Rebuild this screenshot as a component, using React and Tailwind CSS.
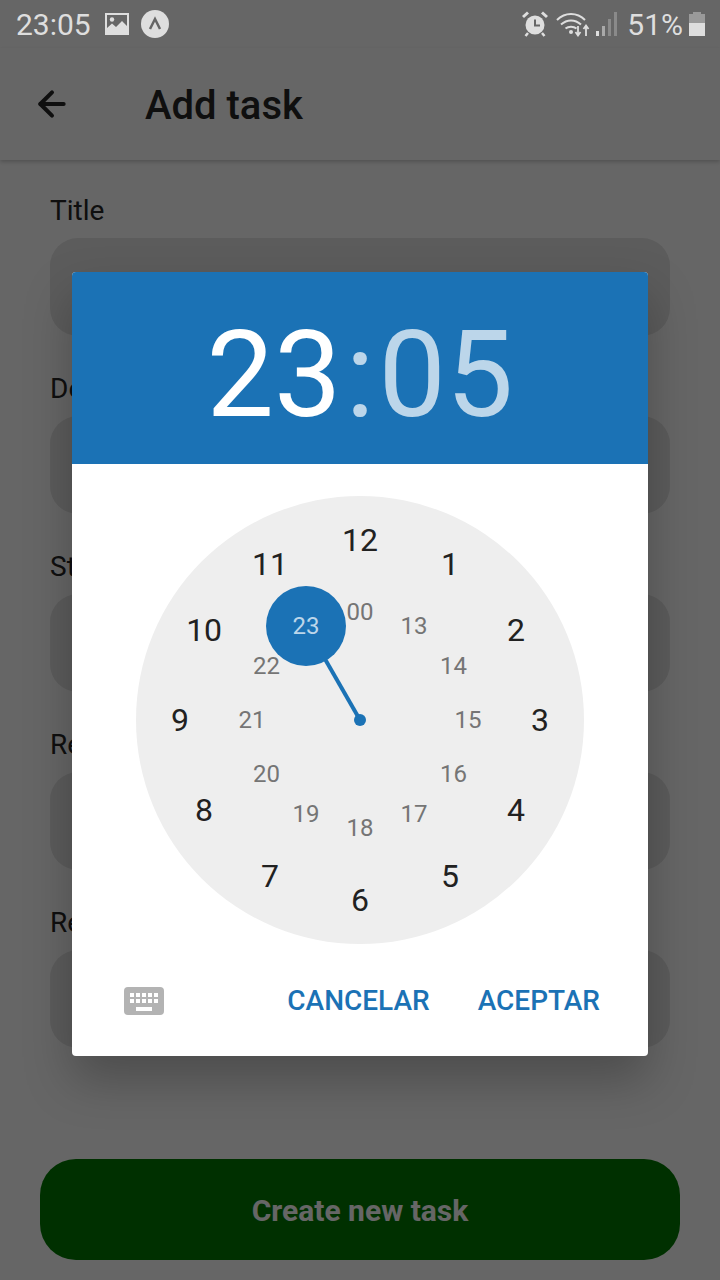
import React from 'react';
import { ArrowLeft } from 'lucide-react';

const fields = ['Title', 'Description', 'Start date', 'Reminder date', 'Reminder time'];

const hours = [12, 1, 2, 3, 4, 5, 6, 7, 8, 9, 10, 11];
const minutes = ['00', 13, 14, 15, 16, 17, 18, 19, 20, 21, 22, 23];

// place a label on the dial, 0 = top, going clockwise
const dialPos = (i, radius) => {
    const a = (i * 30 * Math.PI) / 180;
    return { left: 224 + radius * Math.sin(a), top: 224 - radius * Math.cos(a) };
};

const StatusIcons = () => (
    <div className="flex items-center text-[#dedede]">
        {/* alarm */}
        <svg width="26" height="26" viewBox="0 0 26 26" className="mr-[8px]">
            <circle cx="13" cy="14" r="9.5" fill="currentColor" />
            <path d="M13 8.5V14.5H18" stroke="#666" strokeWidth="2" fill="none" />
            <path d="M1 6L6 1.5M25 6L20 1.5" stroke="currentColor" strokeWidth="3" />
            <path d="M6 22L3.5 25M20 22L22.5 25" stroke="currentColor" strokeWidth="2.5" />
        </svg>
        {/* wifi + data arrows */}
        <svg width="34" height="26" viewBox="0 0 34 26" fill="none" className="mr-[5px]">
            <path d="M1 9C9 1 21 1 29 9" stroke="currentColor" strokeWidth="2" />
            <path d="M5 13.5C11 8 19 8 25 13.5" stroke="currentColor" strokeWidth="2" />
            <path d="M9.500 17.500C12.500 15 17.500 15 20.500 17.500" stroke="currentColor" strokeWidth="2" />
            <circle cx="15" cy="21" r="2" fill="currentColor" />
            <path d="M22 15V23M19.500 21L22 24.500L24.500 21" stroke="currentColor" strokeWidth="1.800" />
            <path d="M30 25V15M27.500 18L30 14.500L32.500 18" stroke="currentColor" strokeWidth="1.800" />
        </svg>
        {/* signal */}
        <svg width="24" height="26" viewBox="0 0 24 26" className="mr-[8px]">
            <rect x="1" y="20" width="3" height="5" fill="currentColor" />
            <rect x="7" y="15" width="3" height="10" fill="#a9a9a9" />
            <rect x="13" y="8" width="3" height="17" fill="#8a8a8a" />
            <rect x="19" y="1" width="3" height="24" fill="#8a8a8a" />
        </svg>
        <span className="text-[30px] leading-none mr-[6px] pt-[1px]">51%</span>
        {/* battery */}
        <div className="flex flex-col items-center w-[16px] h-[24px] mr-[15px]">
            <div className="w-[8px] h-[2px] bg-[#9a9a9a]" />
            <div className="w-[16px] h-[9px] bg-[#9a9a9a]" />
            <div className="w-[16px] h-[13px] bg-[#dedede]" />
        </div>
    </div>
);

const StatusBar = () => (
    <div className="relative z-20 flex h-[48px] items-center justify-between pl-[16px] text-[#dedede]">
        <div className="flex items-center">
            <span className="text-[30px] leading-none pt-[1px]">23:05</span>
            <svg width="24" height="22" viewBox="0 0 24 22" className="ml-[14px]">
                <path fill="currentColor" fillRule="evenodd" d="M0 0H24V22H0ZM2 2V15L7 10.500L11 14L17 8L22 13V2Z" />
                <circle cx="7" cy="6.500" r="2.200" fill="currentColor" />
            </svg>
            <svg width="28" height="28" viewBox="0 0 28 28" className="ml-[12px]">
                <circle cx="14" cy="14" r="14" fill="currentColor" />
                <path d="M9 19L14 9L19 19" stroke="#666" strokeWidth="2.500" fill="none" />
            </svg>
        </div>
        <StatusIcons />
    </div>
);

const Clock = () => (
    <div className="relative w-[448px] h-[448px] rounded-full bg-[#eeeeee]">
        <svg width="448" height="448" className="absolute inset-0">
            <line x1="224" y1="224" x2="170" y2="130" stroke="#1b72b5" strokeWidth="4" />
            <circle cx="224" cy="224" r="6" fill="#1b72b5" />
            <circle cx="170" cy="130" r="40" fill="#1b72b5" />
        </svg>
        {hours.map((h, i) => (
            <span
                key={h}
                className="absolute -translate-x-1/2 -translate-y-1/2 text-[32px] leading-none text-[#212121]"
                style={dialPos(i, 180)}
            >
                {h}
            </span>
        ))}
        {minutes.map((m, i) => (
            <span
                key={m}
                className={`absolute -translate-x-1/2 -translate-y-1/2 text-[24px] leading-none ${m === 23 ? 'text-[#bcd6ea]' : 'text-[#757575]'}`}
                style={dialPos(i, 108)}
            >
                {m}
            </span>
        ))}
    </div>
);

const TimeDialog = () => (
    <div className="w-[576px] h-[784px] rounded-[4px] overflow-hidden bg-white shadow-[0_24px_48px_rgba(0,0,0,0.25)]">
        <div className="flex h-[192px] items-center justify-center bg-[#1b72b5] pt-[14px] text-[120px] leading-none">
            <span className="text-white">23</span>
            <span className="mx-[4px] text-[#bcd6ea]">:</span>
            <span className="text-[#bcd6ea]">05</span>
        </div>
        <div className="flex justify-center pt-[32px]">
            <Clock />
        </div>
        <div className="flex items-center pl-[52px] pr-[48px] pt-[42px]">
            <svg width="40" height="28" viewBox="0 0 40 28">
                <rect width="40" height="28" rx="4" fill="#b3b3b3" />
                <g fill="#fff">
                    <rect x="6" y="6" width="4" height="4" />
                    <rect x="12" y="6" width="4" height="4" />
                    <rect x="18" y="6" width="4" height="4" />
                    <rect x="24" y="6" width="4" height="4" />
                    <rect x="30" y="6" width="4" height="4" />
                    <rect x="6" y="12" width="4" height="4" />
                    <rect x="12" y="12" width="4" height="4" />
                    <rect x="18" y="12" width="4" height="4" />
                    <rect x="24" y="12" width="4" height="4" />
                    <rect x="30" y="12" width="4" height="4" />
                    <rect x="12" y="20" width="16" height="4" />
                </g>
            </svg>
            <div className="ml-auto mt-[1px] flex gap-[48px] text-[28px] font-medium leading-none text-[#1b72b5]">
                <span>CANCELAR</span>
                <span>ACEPTAR</span>
            </div>
        </div>
    </div>
);

const App = () => {
    return (
        <div className="relative h-[1280px] w-[720px] overflow-hidden bg-white font-['Roboto',sans-serif]">
            <StatusBar />

            {/* App bar */}
            <header className="flex h-[112px] items-center pl-[32px] text-[#262626] shadow-[0_2px_4px_rgba(0,0,0,0.2)]">
                <ArrowLeft size={40} strokeWidth={2.400} />
                <span className="ml-[73px] pt-[3px] text-[40px] font-medium leading-none">Add task</span>
            </header>

            {/* Form behind the dialog */}
            <main className="flex flex-col gap-[36px] px-[50px] pt-[34px]">
                {fields.map((label) => (
                    <div key={label}>
                        <div className="mb-[10px] h-[34px] text-[28px] leading-[34px] text-[#262626]">{label}</div>
                        <div className="h-[98px] rounded-[28px] bg-[#e5e5e5]" />
                    </div>
                ))}
            </main>

            <div className="absolute inset-x-[40px] top-[1159px] flex h-[101px] items-center justify-center rounded-[36px] bg-[#007800] pt-[2px] text-[30px] font-bold text-white">
                Create new task
            </div>

            {/* Modal backdrop */}
            <div className="absolute inset-0 z-10 flex justify-center bg-black/60 pt-[272px]">
                <TimeDialog />
            </div>
        </div>
    );
};

export default App;
